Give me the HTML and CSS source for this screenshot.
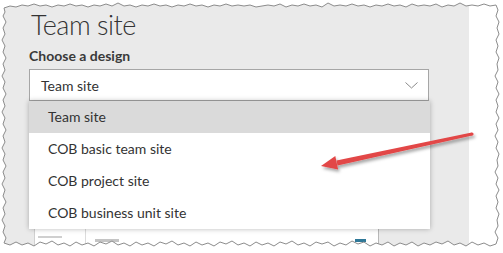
FILE: index.html
```html
<!DOCTYPE html>
<html lang="en">
<head>
    <meta charset="UTF-8">
    <title>Team site</title>
    <link rel="stylesheet" href="styles.css">
</head>
<body>
    <div class="page">
        <div class="panel">
            <h1 class="title">Team site</h1>
            <label class="field-label">Choose a design</label>
            <div class="select">
                <div class="select-box">
                    <span>Team site</span>
                    <svg class="chevron" width="13" height="7" viewBox="0 0 13 7">
                        <path d="M0.5 0.5 L6.5 6 L12.5 0.5" fill="none" stroke="#8a8a8a" stroke-width="1"/>
                    </svg>
                </div>
                <ul class="select-menu">
                    <li class="option selected">Team site</li>
                    <li class="option">COB basic team site</li>
                    <li class="option">COB project site</li>
                    <li class="option">COB business unit site</li>
                </ul>
            </div>
            <div class="card">
                <div class="card-side">
                    <span class="bar bar-side"></span>
                </div>
                <div class="card-main">
                    <span class="bar bar-main"></span>
                    <span class="bar bar-accent"></span>
                </div>
            </div>
        </div>
    </div>

    <!-- red callout arrow -->
    <svg class="arrow" width="503" height="253" viewBox="0 0 503 253">
        <defs>
            <filter id="shadow" x="-20%" y="-50%" width="140%" height="200%">
                <feDropShadow dx="1.5" dy="2.5" stdDeviation="1.5" flood-color="#000" flood-opacity="0.35"/>
            </filter>
        </defs>
        <g filter="url(#shadow)" fill="#e24646">
            <polygon points="472.3,135.5 471.7,132.5 336.5,160.5 337.5,165.4"/>
            <circle cx="472" cy="134" r="1.6"/>
            <polygon points="321,166 335.3,155.9 338.1,169.6"/>
        </g>
    </svg>

    <!-- torn paper edge -->
    <svg class="torn" width="503" height="253" viewBox="0 0 503 253">
        <path fill="#fff" fill-rule="evenodd" d="M0 0 H503 V253 H0 Z M4,8 L10,6 L16,7 L22,5 L28,6 L34,4 L40,6 L46,5 L52,7 L58,5 L64,6 L70,4 L76,6 L82,5 L88,7 L94,5 L100,6 L106,4 L112,6 L118,3 L124,6 L130,5 L136,7 L142,5 L148,6 L154,4 L160,6 L166,5 L172,7 L178,5 L184,6 L190,4 L196,6 L202,5 L208,7 L214,5 L220,6 L226,4 L232,6 L238,5 L244,6 L250,5 L256,7 L262,6 L268,5 L274,6 L280,4 L286,7 L292,5 L298,6 L304,4 L310,6 L316,5 L322,7 L328,3 L334,6 L340,5 L346,6 L352,4 L358,6 L364,5 L370,7 L376,5 L382,6 L388,4 L394,6 L400,5 L406,7 L412,4 L418,6 L424,5 L430,6 L436,4 L442,7 L448,5 L454,6 L460,3 L466,6 L472,5 L478,6 L484,4 L490,6 L496,5 L498,10 L496,16 L499,22 L497,28 L499,34 L496,40 L498,46 L496,52 L499,58 L497,64 L498,70 L495,76 L498,82 L496,88 L499,94 L496,100 L498,106 L496,112 L499,118 L496,124 L498,130 L495,136 L498,142 L496,148 L499,154 L497,160 L498,166 L495,172 L498,178 L496,184 L499,190 L496,196 L498,202 L496,208 L499,214 L497,220 L498,226 L495,232 L498,238 L496,244 L490,246 L484,243 L478,245 L472,242 L466,246 L460,243 L454,245 L448,241 L442,244 L436,242 L430,245 L424,243 L418,246 L412,242 L406,245 L400,243 L394,246 L388,242 L382,245 L376,243 L370,246 L364,242 L358,244 L352,241 L346,245 L340,243 L334,246 L328,242 L322,244 L316,242 L310,246 L304,243 L298,245 L292,241 L286,244 L280,242 L274,246 L268,243 L262,245 L256,242 L250,246 L244,243 L238,245 L232,241 L226,244 L220,242 L214,246 L208,243 L202,245 L196,242 L190,246 L184,243 L178,245 L172,241 L166,244 L160,242 L154,246 L148,243 L142,245 L136,242 L130,246 L124,243 L118,245 L112,241 L106,244 L100,242 L94,246 L88,243 L82,245 L76,242 L70,246 L64,243 L58,245 L52,241 L46,244 L40,242 L34,246 L28,243 L22,245 L16,242 L10,245 L4,243 L6,238 L3,232 L5,226 L2,220 L5,214 L3,208 L6,202 L3,196 L5,190 L2,184 L5,178 L3,172 L6,166 L3,160 L5,154 L2,148 L5,142 L3,136 L6,130 L3,124 L5,118 L2,112 L5,106 L3,100 L6,94 L3,88 L5,82 L2,76 L5,70 L3,64 L6,58 L3,52 L5,46 L2,40 L5,34 L3,28 L6,22 L3,16 L5,12 Z"/>
        <path fill="none" stroke="#8c8c8c" stroke-width="1" d="M4,8 L10,6 L16,7 L22,5 L28,6 L34,4 L40,6 L46,5 L52,7 L58,5 L64,6 L70,4 L76,6 L82,5 L88,7 L94,5 L100,6 L106,4 L112,6 L118,3 L124,6 L130,5 L136,7 L142,5 L148,6 L154,4 L160,6 L166,5 L172,7 L178,5 L184,6 L190,4 L196,6 L202,5 L208,7 L214,5 L220,6 L226,4 L232,6 L238,5 L244,6 L250,5 L256,7 L262,6 L268,5 L274,6 L280,4 L286,7 L292,5 L298,6 L304,4 L310,6 L316,5 L322,7 L328,3 L334,6 L340,5 L346,6 L352,4 L358,6 L364,5 L370,7 L376,5 L382,6 L388,4 L394,6 L400,5 L406,7 L412,4 L418,6 L424,5 L430,6 L436,4 L442,7 L448,5 L454,6 L460,3 L466,6 L472,5 L478,6 L484,4 L490,6 L496,5 L498,10 L496,16 L499,22 L497,28 L499,34 L496,40 L498,46 L496,52 L499,58 L497,64 L498,70 L495,76 L498,82 L496,88 L499,94 L496,100 L498,106 L496,112 L499,118 L496,124 L498,130 L495,136 L498,142 L496,148 L499,154 L497,160 L498,166 L495,172 L498,178 L496,184 L499,190 L496,196 L498,202 L496,208 L499,214 L497,220 L498,226 L495,232 L498,238 L496,244 L490,246 L484,243 L478,245 L472,242 L466,246 L460,243 L454,245 L448,241 L442,244 L436,242 L430,245 L424,243 L418,246 L412,242 L406,245 L400,243 L394,246 L388,242 L382,245 L376,243 L370,246 L364,242 L358,244 L352,241 L346,245 L340,243 L334,246 L328,242 L322,244 L316,242 L310,246 L304,243 L298,245 L292,241 L286,244 L280,242 L274,246 L268,243 L262,245 L256,242 L250,246 L244,243 L238,245 L232,241 L226,244 L220,242 L214,246 L208,243 L202,245 L196,242 L190,246 L184,243 L178,245 L172,241 L166,244 L160,242 L154,246 L148,243 L142,245 L136,242 L130,246 L124,243 L118,245 L112,241 L106,244 L100,242 L94,246 L88,243 L82,245 L76,242 L70,246 L64,243 L58,245 L52,241 L46,244 L40,242 L34,246 L28,243 L22,245 L16,242 L10,245 L4,243 L6,238 L3,232 L5,226 L2,220 L5,214 L3,208 L6,202 L3,196 L5,190 L2,184 L5,178 L3,172 L6,166 L3,160 L5,154 L2,148 L5,142 L3,136 L6,130 L3,124 L5,118 L2,112 L5,106 L3,100 L6,94 L3,88 L5,82 L2,76 L5,70 L3,64 L6,58 L3,52 L5,46 L2,40 L5,34 L3,28 L6,22 L3,16 L5,12 Z"/>
    </svg>
</body>
</html>
```

FILE: styles.css
```css
* {
    margin: 0;
    padding: 0;
    box-sizing: border-box;
}

body {
    width: 503px;
    height: 253px;
    overflow: hidden;
    position: relative;
    background-color: #fff;
    font-family: 'Lato', 'Open Sans', sans-serif;
    color: #333;
}

.page {
    padding: 3px 0 0 3px;
}

.panel {
    width: 466px;
    height: 250px;
    background-color: #eaeaea;
    padding: 0 0 0 26px;
    overflow: hidden;
}

.title {
    font-weight: 300;
    font-size: 27px;
    letter-spacing: -0.5px;
    line-height: 36px;
    padding-top: 4px;
    padding-left: 2px;
    color: #333;
}

.field-label {
    display: block;
    font-size: 14px;
    font-weight: 700;
    line-height: 18px;
    margin-top: 4px;
    color: #3a3a3a;
}

.select {
    position: relative;
    width: 400px;
    margin-top: 4px;
}

.select-box {
    height: 32px;
    background-color: #fff;
    border: 1px solid #a6a6a6;
    display: flex;
    align-items: center;
    justify-content: space-between;
    padding: 0 10px 0 11px;
    font-size: 14px;
}

.chevron {
    display: block;
}

/* dropdown menu lies over the card below */
.select-menu {
    position: absolute;
    left: 0;
    top: 32px;
    width: 401px;
    list-style: none;
    background-color: #fff;
    box-shadow: 0 0 5px rgba(0, 0, 0, 0.28);
    z-index: 2;
}

.option {
    height: 32px;
    line-height: 32px;
    padding-left: 19px;
    font-size: 14px;
    color: #333;
}

.option.selected {
    background-color: #dadada;
}

.card {
    display: flex;
    width: 345px;
    height: 60px;
    margin: 105px 0 0 5px;
    background-color: #fff;
    border-left: 1px solid #d0d0d0;
    border-right: 1px solid #b8b8b8;
}

.card-side {
    width: 51px;
    border-right: 1px solid #dcdcdc;
    padding: 30px 0 0 3px;
}

.card-main {
    flex: 1;
    display: flex;
    justify-content: space-between;
    padding: 33px 12px 0 9px;
}

.bar {
    display: block;
    height: 2px;
}

.bar-side {
    width: 24px;
    background-color: #cfcfcf;
}

.bar-main {
    width: 24px;
    height: 3px;
    background-color: #c4c4c4;
}

.bar-accent {
    width: 11px;
    height: 3px;
    background-color: #2f7898;
}

.arrow,
.torn {
    position: absolute;
    left: 0;
    top: 0;
    pointer-events: none;
}

.arrow {
    z-index: 3;
}

.torn {
    z-index: 4;
}
```
